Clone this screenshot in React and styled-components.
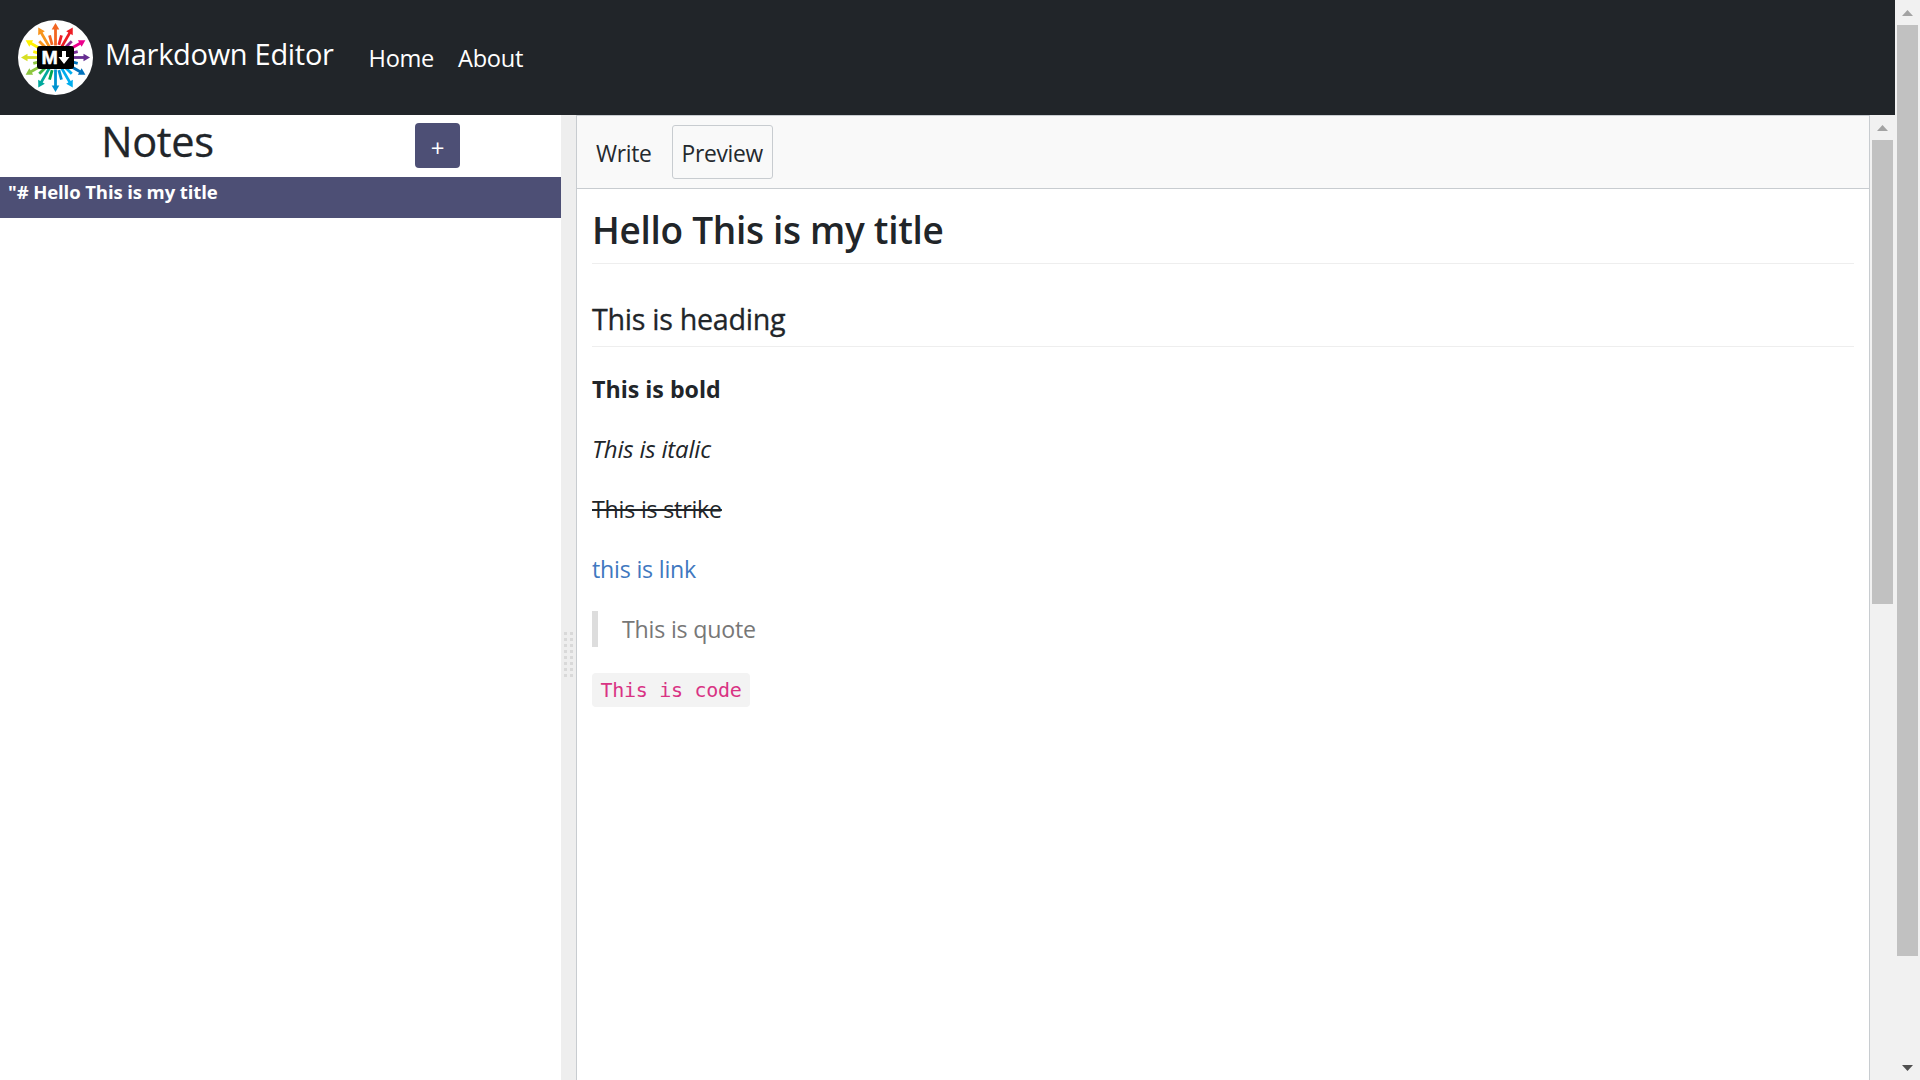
import * as React from 'react';
import styled, { createGlobalStyle } from 'styled-components';

const GlobalStyle = createGlobalStyle`
  html, body, #root {
    height: 100%;
  }
  body {
    margin: 0;
    background: #fff;
    color: #212529;
    font-family: "Open Sans", "Noto Sans", "Liberation Sans", sans-serif;
    font-size: 23.2px;
    line-height: 36px;
    overflow: hidden;
  }
`;

const Page = styled.div`
  display: flex;
  height: 100%;
  overflow: hidden;
`;

const PageColumn = styled.div`
  flex: 1;
  min-width: 0;
  display: flex;
  flex-direction: column;
`;

const ScrollTrack = styled.div`
  width: 25px;
  flex: none;
  display: flex;
  flex-direction: column;
  background: #f1f1f1;
`;

const ScrollButton = styled.div`
  height: 25px;
  flex: none;
  display: flex;
  align-items: center;
  justify-content: center;
`;

const ScrollThumb = styled.div`
  height: ${(p) => p.$size}px;
  flex: none;
  margin: 0 2px;
  background: #c1c1c1;
`;

const ScrollSpacer = styled.div`
  flex: 1;
  min-height: 0;
`;

const Navbar = styled.nav`
  height: 115px;
  flex: none;
  background: #212529;
  display: flex;
  align-items: center;
  padding-left: 18px;
`;

const Brand = styled.a`
  display: flex;
  align-items: center;
  color: #fff;
  font-size: 29px;
  letter-spacing: -0.3px;
`;

const BrandLabel = styled.span`
  margin-left: 12px;
  position: relative;
  top: -4px;
`;

const NavLinks = styled.div`
  display: flex;
  gap: 24px;
  margin-left: 35px;
`;

const NavLink = styled.a`
  color: #fff;
  font-size: 23.6px;
  letter-spacing: -0.3px;
`;

const Split = styled.main`
  flex: 1;
  min-height: 0;
  display: flex;
`;

const Sidebar = styled.aside`
  width: 561px;
  flex: none;
`;

const SidebarHeader = styled.header`
  height: 62px;
  display: flex;
  align-items: flex-start;
`;

const SidebarTitle = styled.h1`
  width: 315px;
  margin: 0;
  font-size: 41.5px;
  font-weight: 400;
  line-height: 52px;
  text-align: center;
  letter-spacing: -0.3px;
  -webkit-text-stroke: 0.3px #212529;
`;

const AddButton = styled.button`
  width: 45px;
  height: 45px;
  margin: 8px 0 0 100px;
  padding: 4px 0 0;
  border: 0;
  border-radius: 4px;
  background: #4d4f75;
  color: #fff;
  font: 400 24px/30px "Open Sans", sans-serif;
`;

const NoteItem = styled.div`
  height: 41px;
  padding-left: 8px;
  background: #4d4f75;
  color: #fff;
  font-size: 18.5px;
  font-weight: 700;
  line-height: 30px;
  letter-spacing: -0.1px;
`;

const Gutter = styled.div`
  width: 15px;
  flex: none;
  background: #eee;
  display: flex;
  justify-content: center;
  padding-top: 517px;
  box-sizing: border-box;
`;

const Grip = styled.div`
  width: 9px;
  height: 45px;
  background-image:
    linear-gradient(90deg, transparent 3px, #eee 3px),
    linear-gradient(#d9d9d9 3px, transparent 3px);
  background-size: 6px 100%, 100% 6px;
`;

const EditorPane = styled.section`
  flex: 1;
  min-width: 0;
  display: flex;
`;

const Editor = styled.div`
  flex: 1;
  min-width: 0;
  box-sizing: border-box;
  border: 1px solid #c8ccd0;
  border-bottom: 0;
`;

const Toolbar = styled.div`
  height: 73px;
  box-sizing: border-box;
  padding: 9px 0 0 9px;
  display: flex;
  gap: 10px;
  background: #f9f9f9;
  border-bottom: 1px solid #c8ccd0;
`;

const Tab = styled.button`
  height: 54px;
  padding: 4px 9px 0;
  border: 1px solid ${(p) => (p.$active ? '#c8ccd0' : 'transparent')};
  border-radius: 3px;
  background: transparent;
  color: #24292e;
  font: 400 22.8px/1 "Open Sans", sans-serif;
  letter-spacing: -0.3px;
`;

const Preview = styled.article`
  padding: 14px 15px 0;
`;

const Title = styled.h1`
  margin: 0 0 34px;
  padding-bottom: 7px;
  border-bottom: 1px solid #eee;
  font-size: 37px;
  font-weight: 600;
  line-height: 53px;
  letter-spacing: -0.3px;
`;

const Heading = styled.h2`
  margin: 0 0 24px;
  padding-bottom: 6px;
  border-bottom: 1px solid #eee;
  font-size: 28.7px;
  font-weight: 500;
  line-height: 42px;
  letter-spacing: -0.3px;
  -webkit-text-stroke: 0.3px #212529;
`;

const Para = styled.p`
  margin: 0 0 24px;
  letter-spacing: -0.2px;
`;

const Bold = styled.strong`
  letter-spacing: 0;
`;

const Italic = styled.em`
  font-size: 24px;
`;

const Link = styled.a`
  color: #4078c0;
`;

const Quote = styled.blockquote`
  margin: 0 0 23px;
  padding-left: 24px;
  border-left: 6px solid #ddd;
  color: #777;
  letter-spacing: -0.2px;
`;

const Code = styled.code`
  display: inline-block;
  padding: 0 8.5px;
  border-radius: 4px;
  background: #f3f3f3;
  color: #d93384;
  font: 20px/34px "DejaVu Sans Mono", "Liberation Mono", monospace;
  letter-spacing: -0.3px;
`;

const longArrows = ['#f26522', '#ed1c24', '#ec008c', '#662d91', '#0072bc', '#00aeef', '#0093d0', '#00a99d', '#8dc63f', '#d7df23', '#fff200', '#f7941d'];
const shortTicks = ['#ed1c24', '#92278f', '#7b2d9b', '#0072bc', '#00aeef', '#0093d0', '#00a651', '#39b54a', '#8dc63f', '#fff200', '#f7941d', '#f26522'];

function Logo() {
  return (
    <svg width="75" height="75" viewBox="-37.5 -37.5 75 75">
      <circle r="37.5" fill="#fff" />
      {shortTicks.map((c, i) => (
        <rect key={i} x="-1.4" y="-23" width="2.8" height="10" fill={c} transform={`rotate(${i * 30 + 15})`} />
      ))}
      {longArrows.map((c, i) => (
        <g key={i} transform={`rotate(${i * 30})`} fill={c}>
          <rect x="-1.4" y="-29" width="2.8" height="17" />
          <path d="M0-34.5L3.8-28H-3.8z" />
        </g>
      ))}
      <rect x="-18.5" y="-11.5" width="37" height="23" rx="3" fill="#000" />
      <text x="-14" y="6.5" fill="#fff" stroke="#fff" strokeWidth="0.5" fontFamily="Liberation Sans, sans-serif" fontWeight="700" fontSize="18" textLength="16" lengthAdjust="spacingAndGlyphs">M</text>
      <path d="M6.5-6.5h4v6h3.5L8.5 6.5 3-.5h3.5z" fill="#fff" />
    </svg>
  );
}

function Scrollbar({ thumb, upColor, showEnd }) {
  return (
    <ScrollTrack>
      <ScrollButton>
        <svg width="11" height="6" viewBox="0 0 11 6"><path d="M5.5 0L11 6H0z" fill={upColor} /></svg>
      </ScrollButton>
      <ScrollThumb $size={thumb} />
      <ScrollSpacer />
      {showEnd && (
        <ScrollButton>
          <svg width="11" height="6" viewBox="0 0 11 6"><path d="M5.5 6L11 0H0z" fill="#505050" /></svg>
        </ScrollButton>
      )}
    </ScrollTrack>
  );
}

export default function App() {
  return (
    <Page>
      <GlobalStyle />
      <PageColumn>
        <Navbar>
          <Brand>
            <Logo />
            <BrandLabel>Markdown Editor</BrandLabel>
          </Brand>
          <NavLinks>
            <NavLink>Home</NavLink>
            <NavLink>About</NavLink>
          </NavLinks>
        </Navbar>
        <Split>
          <Sidebar>
            <SidebarHeader>
              <SidebarTitle>Notes</SidebarTitle>
              <AddButton>+</AddButton>
            </SidebarHeader>
            <NoteItem>"# Hello This is my title</NoteItem>
          </Sidebar>
          <Gutter>
            <Grip />
          </Gutter>
          <EditorPane>
            <Editor>
              <Toolbar>
                <Tab>Write</Tab>
                <Tab $active>Preview</Tab>
              </Toolbar>
              <Preview>
                <Title>Hello This is my title</Title>
                <Heading>This is heading</Heading>
                <Para><Bold>This is bold</Bold></Para>
                <Para><Italic>This is italic</Italic></Para>
                <Para><del>This is strike</del></Para>
                <Para><Link>this is link</Link></Para>
                <Quote>This is quote</Quote>
                <Para><Code>This is code</Code></Para>
              </Preview>
            </Editor>
            <Scrollbar thumb={464} upColor="#a3a3a3" />
          </EditorPane>
        </Split>
      </PageColumn>
      <Scrollbar thumb={931} upColor="#a3a3a3" showEnd />
    </Page>
  );
}
